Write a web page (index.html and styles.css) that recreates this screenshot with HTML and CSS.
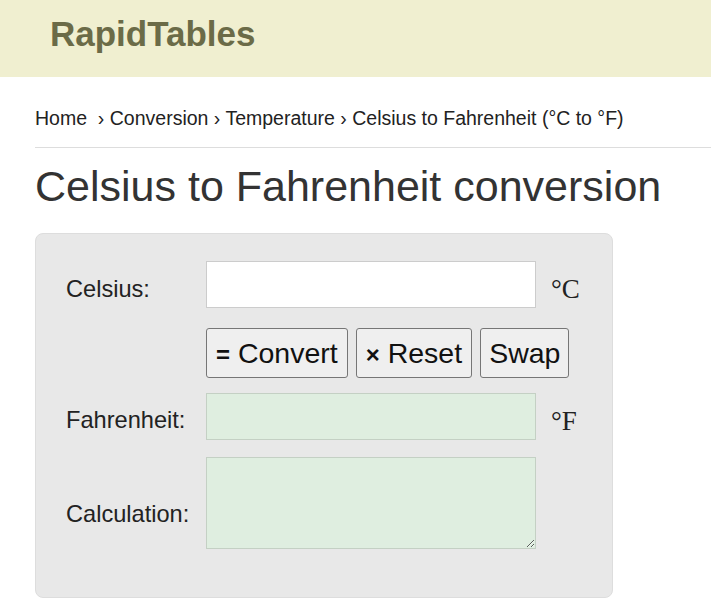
FILE: index.html
```html
<!DOCTYPE html>
<html lang="en">
<head>
    <meta charset="UTF-8">
    <meta name="viewport" content="width=device-width, initial-scale=1.0">
    <title>Celsius to Fahrenheit conversion</title>
    <link rel="stylesheet" href="styles.css">
</head>
<body>
    <header class="top-bar">
        <a class="logo" href="#">RapidTables</a>
    </header>
    <main class="content">
        <nav class="breadcrumb">
            <a href="#">Home</a>&nbsp; › <a href="#">Conversion</a> › <a href="#">Temperature</a> › Celsius to Fahrenheit (°C to °F)
        </nav>
        <hr class="divider">
        <h1>Celsius to Fahrenheit conversion</h1>
        <form class="calc-box">
            <div class="calc-row row-input">
                <label for="x1">Celsius:</label>
                <input type="text" id="x1" class="field">
                <span class="unit">°C</span>
            </div>
            <div class="calc-row row-buttons">
                <span></span>
                <div class="btn-group">
                    <button type="button" class="btn"><b>=</b> Convert</button>
                    <button type="reset" class="btn"><b>×</b> Reset</button>
                    <button type="button" class="btn btn-swap">Swap</button>
                </div>
            </div>
            <div class="calc-row row-result">
                <label for="y1">Fahrenheit:</label>
                <input type="text" id="y1" class="field result" readonly>
                <span class="unit">°F</span>
            </div>
            <div class="calc-row row-calc">
                <label for="calc">Calculation:</label>
                <textarea id="calc" class="field result calc-area" readonly></textarea>
            </div>
        </form>
    </main>
</body>
</html>
```

FILE: styles.css
```css
* { margin: 0; padding: 0; box-sizing: border-box; }
body { font-family: Arial, "Liberation Sans", sans-serif; color: #333; background: #fff; }
.top-bar { background: #f0efd0; height: 77px; padding: 16px 0 0 50px; }
.logo { display: block; font-size: 35px; line-height: 35px; font-weight: bold; color: #6b6b47; text-decoration: none; }
.content { padding-left: 35px; }
.breadcrumb { padding-top: 28px; font-size: 19.5px; color: #222; line-height: 26px; }
.breadcrumb a { color: #222; text-decoration: none; }
.divider { border: none; border-top: 1px solid #ddd; margin-top: 16px; }
h1 { font-size: 43px; font-weight: normal; color: #333; margin: 13px 0 22px; line-height: 50px; }
.calc-box { width: 578px; background: #e8e8e8; border: 1px solid #ddd; border-radius: 8px; padding: 27px 0 48px 30px; }
.calc-row { display: grid; grid-template-columns: 140px 330px auto; align-items: center; }
.row-buttons { margin-top: 20px; }
.row-result { margin-top: 15px; }
.row-calc { margin-top: 17px; }
.calc-row label { font-size: 23.6px; color: #222; padding-top: 9px; }
.row-result label { padding-top: 8px; }
.row-calc label { padding-top: 22px; }
.field { height: 47px; border: 1px solid #ccc; background: #fff; font-size: 22px; padding: 4px; font-family: inherit; }
.field.result { background: #dfeee0; border-color: #c4d0c4; }
.calc-area { height: 92px; resize: vertical; }
.unit { font-family: "Liberation Serif", "Times New Roman", serif; font-size: 27px; color: #222; padding: 9px 0 0 15px; }
.btn-group { display: flex; gap: 8px; grid-column: 2 / 4; }
.btn { height: 50px; padding: 0 9px; font-size: 28.5px; font-family: inherit; color: #111; background: #efefef; border: 1px solid #767676; border-radius: 3px; }
.btn b { font-size: 24px; }
.btn-swap { padding: 0 8px; }
```
